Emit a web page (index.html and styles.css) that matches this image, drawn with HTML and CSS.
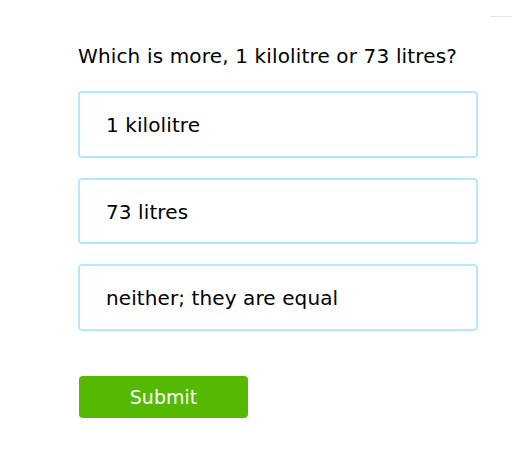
FILE: index.html
```html
<!DOCTYPE html>
<html>
<head>
<meta charset="utf-8">
<link rel="stylesheet" href="styles.css">
</head>
<body>
<div class="topline"></div>
<main class="quiz">
  <p class="question">Which is more, 1 kilolitre or 73 litres?</p>
  <div class="options">
    <div class="option">1 kilolitre</div>
    <div class="option">73 litres</div>
    <div class="option">neither; they are equal</div>
  </div>
  <button class="submit">Submit</button>
</main>
</body>
</html>
```
FILE: styles.css
```css
html, body {
  margin: 0;
  padding: 0;
  background: #fff;
}
body {
  font-family: "DejaVu Sans", Verdana, sans-serif;
  color: #000;
  position: relative;
  width: 512px;
  height: 455px;
  overflow: hidden;
}
.topline {
  position: absolute;
  top: 16px;
  left: 490px;
  width: 22px;
  height: 1px;
  background: #e6e6e6;
}
.quiz {
  padding: 42px 0 0 78px;
  width: 400px;
}
.question {
  margin: 0 0 21px 0;
  font-size: 20px;
  line-height: 28px;
  letter-spacing: 0.15px;
}
.options {
  display: flex;
  flex-direction: column;
  gap: 20px;
}
.option {
  box-sizing: border-box;
  height: 66.5px;
  border: 2px solid #b3e9ff;
  border-radius: 4px;
  padding: 2px 26px 0;
  display: flex;
  align-items: center;
  font-size: 20px;
  letter-spacing: 0.1px;
}
.submit {
  margin-top: 45px;
  margin-left: 1px;
  width: 169px;
  height: 42px;
  border: none;
  border-radius: 4px;
  background: #54b900;
  color: #fff;
  font-family: "DejaVu Sans", Verdana, sans-serif;
  font-size: 19px;
  padding: 0;
}
```
